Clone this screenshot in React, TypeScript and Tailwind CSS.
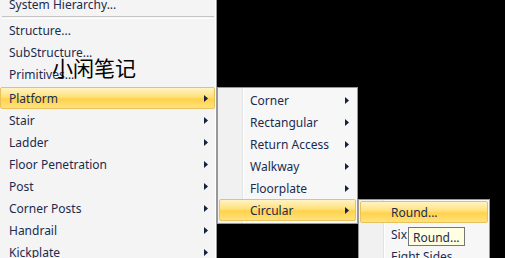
import React from "react";

const font = { fontFamily: '"Noto Sans", "Open Sans", sans-serif' };

function Arrow() {
  return (
    <svg width="4" height="7" viewBox="0 0 4 7" className="shrink-0">
      <path d="M0 0 L4 3.5 L0 7 Z" fill="#15213f" />
    </svg>
  );
}

function Row({
  label,
  arrow,
  hot,
  pl = "pl-[8px]",
}: {
  label: string;
  arrow?: boolean;
  hot?: boolean;
  pl?: string;
}) {
  return (
    <div
      className={
        "h-[22px] flex items-center justify-between pr-[6px] " +
        pl +
        (hot
          ? " rounded-[2px] border border-[#e8c25c] bg-[linear-gradient(to_bottom,#fff3c4_0%,#ffe17a_45%,#ffd24a_55%,#ffe27e_100%)]"
          : " border border-transparent")
      }
    >
      <span className="text-[12px] text-[#1b2b4f] leading-none translate-y-[1px]">
        {label}
      </span>
      {arrow && <Arrow />}
    </div>
  );
}

export default function App() {
  return (
    <div
      className="relative w-[505px] h-[258px] bg-black overflow-hidden"
      style={font}
    >
      {/* main menu */}
      <div className="absolute left-0 top-[-7px] w-[217px] h-[280px] bg-[#f4f4f4] border-r border-[#9a9a9a] flex flex-col">
        <div className="border-r border-white flex-1 flex flex-col">
          <Row label="System Hierarchy..." />
          <div className="h-[3px] flex items-center">
            <div className="h-[1px] w-[212px] ml-[2px] bg-[#c5c5c5]" />
          </div>
          <div className="h-[1px] ml-[2px] w-[212px] bg-white" />
          <Row label="Structure..." />
          <Row label="SubStructure..." />
          <Row label="Primitives..." />
          <div className="h-[2px]" />
          <Row label="Platform" arrow hot />
          <Row label="Stair" arrow />
          <Row label="Ladder" arrow />
          <Row label="Floor Penetration" arrow />
          <Row label="Post" arrow />
          <Row label="Corner Posts" arrow />
          <Row label="Handrail" arrow />
          <Row label="Kickplate" arrow />
        </div>
      </div>

      {/* submenu 2 */}
      <div className="absolute left-[217px] top-[87px] w-[141px] h-[137px] bg-[#f7f7f7] border border-[#979797] p-[1px]">
        <div className="absolute left-0 top-0 bottom-0 w-[24px] bg-[#f1f1f1]" />
        <div className="absolute left-[24px] top-0 bottom-0 w-[1px] bg-[#e2e3e3]" />
        <div className="absolute left-[25px] top-0 bottom-0 w-[1px] bg-white" />
        <div className="relative flex flex-col">
          <Row label="Corner" arrow pl="pl-[30px]" />
          <Row label="Rectangular" arrow pl="pl-[30px]" />
          <Row label="Return Access" arrow pl="pl-[30px]" />
          <Row label="Walkway" arrow pl="pl-[30px]" />
          <Row label="Floorplate" arrow pl="pl-[30px]" />
          <Row label="Circular" arrow hot pl="pl-[30px]" />
        </div>
      </div>

      {/* submenu 3 */}
      <div className="absolute left-[358px] top-[199px] w-[132px] h-[80px] bg-[#f7f7f7] border border-[#979797] p-[1px]">
        <div className="absolute left-0 top-0 bottom-0 w-[24px] bg-[#f1f1f1]" />
        <div className="absolute left-[24px] top-0 bottom-0 w-[1px] bg-[#e2e3e3]" />
        <div className="absolute left-[25px] top-0 bottom-0 w-[1px] bg-white" />
        <div className="relative flex flex-col">
          <Row label="Round..." hot pl="pl-[30px]" />
          <Row label="Six Sides..." pl="pl-[30px]" />
          <Row label="Eight Sides..." pl="pl-[30px]" />
        </div>
      </div>

      {/* tooltip */}
      <div className="absolute left-[408px] top-[227px] h-[19px] px-[4px] bg-[#ffffe1] border border-[#767676] flex items-center text-[12px] text-[#1b2b4f] leading-none">
        <span className="translate-y-[1px]">Round...</span>
      </div>

      {/* watermark */}
      <div
        className="absolute left-[52px] top-[57px] text-[21px] leading-none text-black"
        style={{ fontFamily: '"Noto Sans CJK SC", sans-serif' }}
      >
        小闲笔记
      </div>
    </div>
  );
}
